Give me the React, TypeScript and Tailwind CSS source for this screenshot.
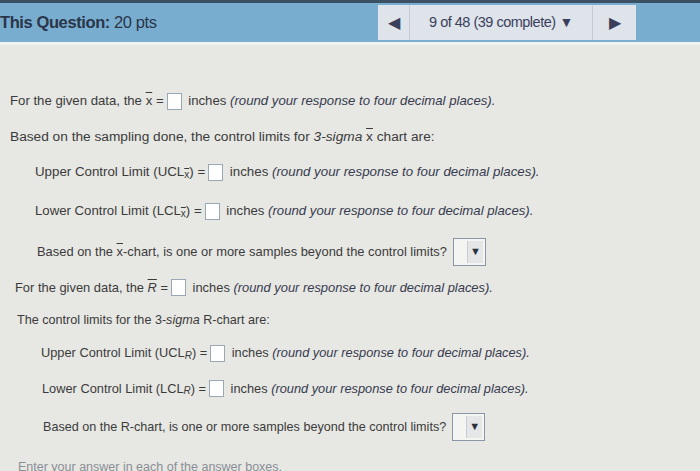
import React from 'react';

const Box = () => (
  <span className="inline-block w-[15px] h-[17px] bg-white border border-[#9aa7b4] align-middle mx-[3px]" />
);

const Drop = () => (
  <span className="inline-flex w-[33px] h-[28px] border border-[#8b97a6] bg-[#f4f4f2] align-middle ml-[6px] p-[2px] justify-end">
    <span className="w-[16px] h-full bg-[#e4e6e8] border-l border-[#c8ccd2] flex items-start justify-center pt-[5px] text-[11px] text-[#2c3140] leading-none">▼</span>
  </span>
);

const XBar = () => <span className="overline">x</span>;

const SubXBar = () => <sub className="overline text-[10px]">x</sub>;

const Hint = () => <i className="text-[#363b4f]">(round your response to four decimal places).</i>;

export default function App() {
  return (
    <div className="w-[700px] h-[471px] overflow-hidden bg-[#e7e7e3] text-[#3b3b3b]" style={{ fontFamily: '"Liberation Sans", Arial, sans-serif' }}>
      {/* Header */}
      <div className="h-[42px] bg-[#78add0] border-t-[3px] border-[#3b5163] flex items-center justify-between pr-[64px]">
        <div className="text-[16.5px] text-[#2b3548] tracking-[-0.4px]">
          <b>This Question:</b> 20 pts
        </div>
        <div className="flex h-[35px] bg-[#dfe3ea] text-[#3a3f5c]">
          <div className="w-[32px] flex items-center justify-center border-r border-[#c6ccd6] text-[16px]">◀</div>
          <div className="w-[183px] flex items-center justify-center gap-[4px] border-r border-[#c6ccd6] text-[14.5px] tracking-[-0.5px]">
            9 of 48 (39 complete)<span className="text-[14px]">▼</span>
          </div>
          <div className="w-[43px] flex items-center justify-center text-[16px]">▶</div>
        </div>
      </div>
      <div className="h-[3px] bg-[#f2f2f0]" />

      {/* Content */}
      <div className="pt-[37px] text-[13.5px]">
        <div className="h-[38px] flex items-center pl-[10px] text-[13.2px]">
          For the given data, the&nbsp;<XBar />&nbsp;=<Box />&nbsp;inches&nbsp;<Hint />
        </div>
        <div className="h-[34px] flex items-center pl-[10px] text-[13.7px]">
          Based on the sampling done, the control limits for&nbsp;<i>3-sigma</i>&nbsp;<XBar />&nbsp;chart are:
        </div>
        <div className="h-[36px] flex items-center pl-[35px] text-[13.3px]">
          Upper Control Limit (UCL<SubXBar />) =<Box />&nbsp;inches&nbsp;<Hint />
        </div>
        <div className="h-[42px] flex items-center pl-[35px] text-[13.2px]">
          Lower Control Limit (LCL<SubXBar />) =<Box />&nbsp;inches&nbsp;<Hint />
        </div>
        <div className="h-[39px] flex items-center pl-[37px] text-[12.9px]">
          Based on the&nbsp;<XBar />-chart, is one or more samples beyond the control limits?<Drop />
        </div>
        <div className="h-[33px] flex items-center pl-[15px] text-[12.9px]">
          For the given data, the&nbsp;<i className="overline">R</i>&nbsp;=<Box />&nbsp;inches&nbsp;<Hint />
        </div>
        <div className="h-[32px] flex items-center pl-[17px] text-[12.6px]">
          The control limits for the 3-<i>sigma</i>&nbsp;R-chart are:
        </div>
        <div className="h-[34px] flex items-center pl-[41px] text-[12.8px]">
          Upper Control Limit (UCL<sub className="italic text-[10px]">R</sub>) =<Box />&nbsp;inches&nbsp;<Hint />
        </div>
        <div className="h-[37px] flex items-center pl-[42px] text-[12.8px]">
          Lower Control Limit (LCL<sub className="italic text-[10px]">R</sub>) =<Box />&nbsp;inches&nbsp;<Hint />
        </div>
        <div className="h-[40px] flex items-center pl-[43px] text-[12.6px]">
          Based on the R-chart, is one or more samples beyond the control limits?<Drop />
        </div>
        <div className="h-[30px] flex items-end pl-[18px] text-[12.5px] text-[#8a8f96]">
          Enter your answer in each of the answer boxes.
        </div>
      </div>
    </div>
  );
}
